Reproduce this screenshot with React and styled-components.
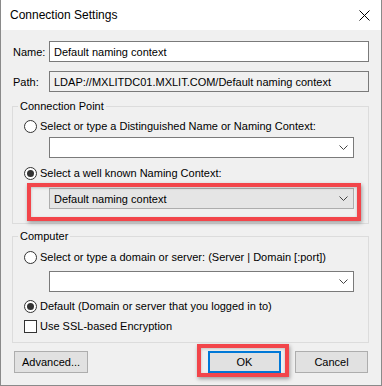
import React from 'react';
import styled, { createGlobalStyle, css } from 'styled-components';

const GlobalStyle = createGlobalStyle`
  html, body { margin: 0; padding: 0; background: #f0f0f0; }
  * { box-sizing: border-box; }
`;

// red annotation frame drawn over a control, offsets are [top, right, bottom, left]
const marked = css`
  position: relative;
  &::after {
    content: '';
    position: absolute;
    top: ${p => p.$mark[0]}px;
    right: ${p => p.$mark[1]}px;
    bottom: ${p => p.$mark[2]}px;
    left: ${p => p.$mark[3]}px;
    border: 4px solid #f2454a;
    box-shadow: 1px 2px 4px rgba(0, 0, 0, 0.35), inset 0 1px 3px rgba(0, 0, 0, 0.2);
    pointer-events: none;
  }
`;

const Window = styled.div`
  width: 382px;
  height: 386px;
  border: 1px solid #8a8a8a;
  border-top: none;
  background: #f0f0f0;
  display: flex;
  flex-direction: column;
  font-family: "Segoe UI", "Liberation Sans", Arial, sans-serif;
  font-size: 11px;
  color: #000;
`;

const TitleBar = styled.div`
  height: 30px;
  background: #fff;
  display: flex;
  align-items: center;
  justify-content: space-between;
  padding: 0 11px 0 9px;
  flex-shrink: 0;
`;

const Title = styled.span`
  font-size: 12px;
  line-height: 16px;
`;

const Body = styled.div`
  padding: 0 12px 0 11px;
  display: flex;
  flex-direction: column;
`;

const FieldRow = styled.div`
  display: flex;
  align-items: center;
  height: 21px;
  margin-top: ${p => p.$top}px;
`;

const Label = styled.span`
  width: 37px;
  padding-left: 1px;
`;

const TextBox = styled.div`
  flex: 1;
  height: 21px;
  border: 1px solid #7a7a7a;
  background: ${p => (p.$readOnly ? '#f0f0f0' : '#fff')};
  padding: 0 4px;
  display: flex;
  align-items: center;
  white-space: nowrap;
`;

const Group = styled.fieldset`
  margin: ${p => p.$top}px 0 0;
  padding: 0 0 ${p => p.$bottom}px;
  border: 1px solid #dcdcdc;
  min-width: 0;
  display: flex;
  flex-direction: column;
`;

const Legend = styled.legend`
  margin-left: 5px;
  padding: 0 2px;
  line-height: 16px;
  height: 16px;
`;

const OptionRow = styled.label`
  display: flex;
  align-items: center;
  gap: 3px;
  height: 16px;
  margin: ${p => p.$top}px 0 0 11px;
  white-space: nowrap;
`;

const Radio = styled.span`
  width: 13px;
  height: 13px;
  border-radius: 50%;
  border: 1px solid #333;
  background: #fff;
  display: flex;
  align-items: center;
  justify-content: center;
  flex-shrink: 0;
  &::after {
    content: '';
    width: 7px;
    height: 7px;
    border-radius: 50%;
    background: ${p => (p.$checked ? '#333' : 'transparent')};
  }
`;

const Check = styled.span`
  width: 13px;
  height: 13px;
  border: 1px solid #333;
  background: #fff;
  flex-shrink: 0;
`;

const Combo = styled.div`
  position: relative;
  width: 305px;
  height: 21px;
  margin: ${p => p.$top}px 0 0 36px;
  border: 1px solid ${p => (p.$list ? '#adadad' : '#7a7a7a')};
  background: ${p => (p.$list ? '#e5e5e5' : '#fff')};
  display: flex;
  align-items: center;
  justify-content: space-between;
  padding: 0 5px 0 4px;
  ${p => p.$mark && marked}
`;

const ButtonRow = styled.div`
  display: flex;
  align-items: center;
  margin: 8px 1px 0 2px;
  gap: 14px;
`;

const Spacer = styled.div`
  flex: 1;
`;

const Button = styled.button`
  width: ${p => p.$w}px;
  height: 22px;
  background: #e1e1e1;
  border: ${p => (p.$default ? '2px solid #0078d7' : '1px solid #adadad')};
  font: inherit;
  color: #000;
  padding: 0;
  margin: 0;
  ${p => p.$mark && marked}
`;

const Chevron = () => (
  <svg width="9" height="5" viewBox="0 0 9 5">
    <path d="M0.5 0.5 L4.5 4.5 L8.5 0.5" fill="none" stroke="#444" strokeWidth="1" />
  </svg>
);

const Close = () => (
  <svg width="11" height="11" viewBox="0 0 11 11">
    <path d="M0.5 0.5 L10.5 10.5 M10.5 0.5 L0.5 10.5" stroke="#000" strokeWidth="1" />
  </svg>
);

export default function App() {
  return (
    <>
      <GlobalStyle />
      <Window>
        <TitleBar>
          <Title>Connection Settings</Title>
          <Close />
        </TitleBar>
        <Body>
          <FieldRow $top={11}>
            <Label>Name:</Label>
            <TextBox>Default naming context</TextBox>
          </FieldRow>
          <FieldRow $top={9}>
            <Label>Path:</Label>
            <TextBox $readOnly>LDAP://MXLITDC01.MXLIT.COM/Default naming context</TextBox>
          </FieldRow>

          <Group $top={6} $bottom={14}>
            <Legend>Connection Point</Legend>
            <OptionRow $top={4}>
              <Radio />
              Select or type a Distinguished Name or Naming Context:
            </OptionRow>
            <Combo $top={3}>
              <span />
              <Chevron />
            </Combo>
            <OptionRow $top={7}>
              <Radio $checked />
              Select a well known Naming Context:
            </OptionRow>
            <Combo $top={7} $list $mark={[-6, -8, -13, -23]}>
              <span>Default naming context</span>
              <Chevron />
            </Combo>
          </Group>

          <Group $top={4} $bottom={8}>
            <Legend>Computer</Legend>
            <OptionRow $top={5}>
              <Radio />
              Select or type a domain or server: (Server | Domain [:port])
            </OptionRow>
            <Combo $top={6}>
              <span />
              <Chevron />
            </Combo>
            <OptionRow $top={6}>
              <Radio $checked />
              Default (Domain or server that you logged in to)
            </OptionRow>
            <OptionRow $top={4}>
              <Check />
              Use SSL-based Encryption
            </OptionRow>
          </Group>

          <ButtonRow>
            <Button $w={74}>Advanced...</Button>
            <Spacer />
            <Button $w={73} $default $mark={[-9, -10, -6, -13]}>OK</Button>
            <Button $w={73}>Cancel</Button>
          </ButtonRow>
        </Body>
      </Window>
    </>
  );
}
